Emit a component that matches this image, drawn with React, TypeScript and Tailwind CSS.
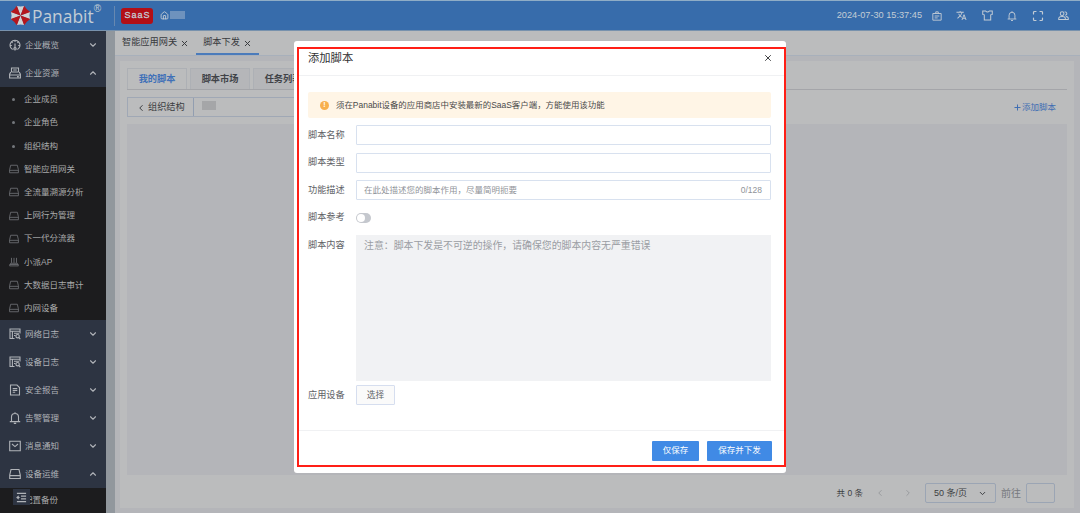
import type { ReactNode } from 'react';
import { ChevronDown, ChevronLeft, ChevronRight, ChevronUp, House, Maximize, Plus, X } from 'lucide-react';
import { MdTranslate } from 'react-icons/md';

const groupsTop = [
  { label: '企业概览', icon: <DashIcon />, open: false },
  { label: '企业资源', icon: <ResourceIcon />, open: true },
];

const subItems: { label: string; kind: 'dot' | 'drive' | 'ap' }[] = [
  { label: '企业成员', kind: 'dot' },
  { label: '企业角色', kind: 'dot' },
  { label: '组织结构', kind: 'dot' },
  { label: '智能应用网关', kind: 'drive' },
  { label: '全流量溯源分析', kind: 'drive' },
  { label: '上网行为管理', kind: 'drive' },
  { label: '下一代分流器', kind: 'drive' },
  { label: '小派AP', kind: 'ap' },
  { label: '大数据日志审计', kind: 'drive' },
  { label: '内网设备', kind: 'drive' },
];

const groupsBottom = [
  { label: '网络日志', icon: <LogIcon />, open: false },
  { label: '设备日志', icon: <LogIcon />, open: false },
  { label: '安全报告', icon: <ReportIcon />, open: false },
  { label: '告警管理', icon: <BellIcon />, open: false },
  { label: '消息通知', icon: <MailIcon />, open: false },
  { label: '设备运维', icon: <DriveIcon />, open: true },
];

const scriptTabs = ['我的脚本', '脚本市场', '任务列表'];

function Svg({ children, size = 12 }: { children: ReactNode; size?: number }) {
  return (
    <svg width={size} height={size} viewBox="0 0 12 12" fill="none" stroke="currentColor" strokeWidth="1.1" className="shrink-0">
      {children}
    </svg>
  );
}

function DashIcon() {
  return (
    <Svg>
      <path d="M3.6 10.6A5 5 0 1 1 8.4 10.6" />
      <path d="M6 1v2M2.4 2.6l1.2 1.2M9.6 2.6L8.4 3.8M1 6.5h1.8M9.2 6.5H11M6 4.5v5" />
      <circle cx="6" cy="9.8" r="1.2" />
    </Svg>
  );
}

function ResourceIcon() {
  return (
    <Svg>
      <path d="M2.5 5V1h7v4M4.2 3h3.6M2.5 5h7M1.8 5L.6 7.2v3.8h10.8V7.2L10.2 5M.6 8h10.8M8 9.6h1.8" />
    </Svg>
  );
}

function LogIcon() {
  return (
    <Svg>
      <path d="M5.5 10.5H1V1h10v4.5M1 3.2h10M3.4 3.2v7.3M5 5.3h5M5 7.5h1.5" />
      <circle cx="8.6" cy="8.2" r="1.7" />
      <path d="M9.8 9.5l1.5 1.6" />
    </Svg>
  );
}

function ReportIcon() {
  return (
    <Svg>
      <path d="M1.5 1H8l2.5 2.5V11h-9zM3.7 4.5h4.6M3.7 6.4h4.6M3.7 8.3h2.5" />
    </Svg>
  );
}

function BellIcon({ size = 12 }: { size?: number }) {
  return (
    <Svg size={size}>
      <path d="M.8 9.6h10.4M2.5 9.5V5a3.5 3.5 0 0 1 7 0v4.5M4.8 11.4h2.4M6 .3v1.2" />
    </Svg>
  );
}

function MailIcon() {
  return (
    <Svg>
      <path d="M.7 1.2h10.6v9.6H.7zM3 4l3 2.6L9 4" />
    </Svg>
  );
}

function DriveIcon({ size = 12 }: { size?: number }) {
  return (
    <Svg size={size}>
      <path d="M2 1.5h8L11.3 7v3.5H.7V7zM.7 7.6h10.6" />
    </Svg>
  );
}

function ApIcon() {
  return (
    <Svg size={10}>
      <path d="M3 1v6M6 1v6M9 1v6M2 7.5h8l1.3 3.2H.7zM.7 9h10.6" />
    </Svg>
  );
}

function BadgeIcon() {
  return (
    <Svg size={10}>
      <path d="M1 3h10v8H1zM4.5 3V1h3v2M3.2 6h5.6M3.2 8.3h3.6" />
    </Svg>
  );
}

function ShirtIcon() {
  return (
    <Svg size={11}>
      <path d="M.8 1h3Q6 3.4 8.2 1h3v3.8L9.5 5.3V11h-7V5.3L.8 4.8z" />
    </Svg>
  );
}

function UsersIcon() {
  return (
    <Svg size={11}>
      <circle cx="4.5" cy="4" r="2" />
      <path d="M.8 10.3V9Q1.2 7 4.5 7T8 9v1.3zM7.2 2.2a1.8 1.8 0 1 1 .6 3.5M8.5 7q2.7.2 2.7 2v1.3H8" />
    </Svg>
  );
}

// Eight wedges, alternating red and light, each with a shallow notch on its outer edge
function Logo() {
  return (
    <svg width="21" height="21" viewBox="-10.5 -10.5 21 21" className="shrink-0">
      {[0, 90, 180, 270, 45, 135, 225, 315].map((deg, i) => (
        <path
          key={deg}
          d={i < 4 ? 'M0 0L-3.9-9.6L0-8.9L3.9-9.6Z' : 'M0 0L-4.4-9.5L0-9L4.4-9.5Z'}
          fill={i < 4 ? '#cfd3d6' : '#b5161d'}
          transform={`rotate(${deg})`}
        />
      ))}
    </svg>
  );
}

function MenuGroup({ label, icon, open }: { label: string; icon: ReactNode; open: boolean }) {
  const Arrow = open ? ChevronUp : ChevronDown;
  return (
    <div className="flex h-7 shrink-0 items-center bg-[#2d3442] pr-2 pl-[9px] text-[#b0b3b8]">
      {icon}
      <span className="ml-1 flex-1 text-[8.5px]">{label}</span>
      <Arrow size={10} strokeWidth={2.6} />
    </div>
  );
}

function Sidebar() {
  return (
    <aside className="relative flex w-[106px] shrink-0 flex-col overflow-hidden bg-[#1c1c1e]">
      {groupsTop.map((g) => (
        <MenuGroup key={g.label} {...g} />
      ))}
      <div className="flex h-[233px] shrink-0 flex-col pt-px">
        {subItems.map(({ label, kind }) => (
          <div key={label} className="flex flex-1 items-center pl-[9px] text-[8.5px] text-[#a9aaab]">
            <span className="flex w-[15px] text-[#696b70]">
              {kind === 'dot' && <i className="ml-[3px] size-[3px] rounded-full bg-[#74777c]" />}
              {kind === 'drive' && <DriveIcon size={10} />}
              {kind === 'ap' && <ApIcon />}
            </span>
            {label}
          </div>
        ))}
      </div>
      {groupsBottom.map((g) => (
        <MenuGroup key={g.label} {...g} />
      ))}
      <div className="flex h-6 shrink-0 items-center pl-6 text-[8.5px] text-[#a9aaab]">配置备份</div>
      <button className="absolute bottom-2 left-[13px] flex h-4 w-[17px] items-center justify-center bg-[#2d3442] text-[#b0b3b8]">
        <Svg size={11}>
          <path d="M1 1.5h10M5.5 4.5H11M5.5 7.5H11M1 10.5h10M1 6h3M3 4.3L1 6l2 1.7" />
        </Svg>
      </button>
    </aside>
  );
}

function Header() {
  return (
    <header className="flex h-[31px] shrink-0 items-center border-t border-b border-t-[#8fadc6] border-b-[#7892ad] bg-[#376cab] text-[#c3ccd5]">
      <div className="flex h-5 w-[115px] items-center border-r border-[#6788b0] pl-[10px]">
        <Logo />
        <span className="ml-px font-['Open_Sans',sans-serif] text-[17.4px] leading-5">Panabit</span>
        <sup className="-top-[7px] text-[10px]">®</sup>
      </div>
      <span className="ml-1.5 flex h-4 w-8 items-center justify-center rounded-[3px] bg-[#b30f16] pl-px text-[9px] tracking-[1px] [-webkit-text-stroke:0.3px]">
        SaaS
      </span>
      <House size={9} strokeWidth={2.4} className="ml-[7px]" />
      <span className="-mt-px ml-px h-2 w-[15px] bg-[#6e92bd]" />
      <span className="ml-auto text-[9.2px]">2024-07-30 15:37:45</span>
      <div className="mr-[11px] ml-2.5 flex w-[137px] shrink-0 items-center justify-between">
        <BadgeIcon />
        <MdTranslate size={11} />
        <ShirtIcon />
        <BellIcon size={10} />
        <Maximize size={12} strokeWidth={2.4} />
        <UsersIcon />
      </div>
    </header>
  );
}

function Workspace() {
  return (
    <main className="flex min-w-0 flex-1 flex-col bg-[#b4b5b9]">
      <nav className="flex h-[25px] shrink-0 border-b border-[#a8b0bb] bg-[#bbbcbd] text-[9.2px] text-[#383a3d]">
        <span className="flex items-center gap-[3px] pl-[7px]">
          智能应用网关 <X size={9} strokeWidth={2.6} />
        </span>
        <span className="ml-[7px] flex w-[63px] items-center gap-[3px] border-b-2 border-[#4b7bbb] pt-0.5 pl-[7px]">
          脚本下发 <X size={9} strokeWidth={2.6} />
        </span>
      </nav>
      <section className="mt-[5px] mr-1.5 mb-[5px] ml-[5px] flex flex-1 flex-col bg-[#bbbcbd] px-[7px] pt-[7px]">
        <div className="flex h-[22px] shrink-0 gap-[3px] border-b border-[#a4a5a9] text-[9.2px] font-bold text-[#404247]">
          {scriptTabs.map((tab, i) => (
            <span
              key={tab}
              className={`flex w-[60px] items-center justify-center border border-b-0 border-[#adb0b5] pt-px ${i === 0 ? 'bg-[#bbbcbd] text-[#3f70b8]' : 'bg-[#b5b6b9]'}`}
            >
              {tab}
            </span>
          ))}
        </div>
        <div className="mt-[7px] flex h-5 shrink-0 items-center text-[9.2px] text-[#3c3e42]">
          <div className="flex h-full w-[300px] items-center border border-[#a0a8b5]">
            <span className="flex h-full w-[66px] items-center gap-0.5 border-r border-[#929eb0] pt-px pl-2">
              <ChevronLeft size={10} strokeWidth={2.4} /> 组织结构
            </span>
            <span className="-mt-[3px] ml-2 h-[9px] w-[14px] bg-[#a5a6a8]" />
          </div>
          <span className="mr-[11px] ml-auto flex items-center text-[8.5px] text-[#3f6eb3]">
            <Plus size={9} strokeWidth={2.6} />
            添加脚本
          </span>
        </div>
        <div className="mt-[7px] h-[351px] shrink-0 bg-[#b4b5b9]" />
        <div className="mt-2 mr-3 flex h-5 items-center justify-end text-[9px] text-[#3c3e42]">
          <span className="mr-3 text-[8.5px]">共 0 条</span>
          <ChevronLeft size={10} className="mr-[18px] text-[#939599]" />
          <ChevronRight size={10} className="mr-3 text-[#939599]" />
          <span className="flex h-5 w-[71px] items-center justify-between rounded-[2px] border border-[#9ba5b4] px-2 pt-px">
            50 条/页 <ChevronDown size={9} strokeWidth={2.6} />
          </span>
          <span className="mx-[5px] text-[10px] text-[#77797d]">前往</span>
          <span className="h-5 w-[29px] rounded-[2px] border border-[#9ba5b4]" />
        </div>
      </section>
    </main>
  );
}

function Field({ label, children, className = 'h-5' }: { label: string; children: ReactNode; className?: string }) {
  return (
    <div className={`flex shrink-0 ${className}`}>
      <label className="flex h-5 w-12 shrink-0 items-center pt-px text-[9.2px] text-[#606266]">{label}</label>
      {children}
    </div>
  );
}

function ScriptDialog() {
  return (
    <div className="absolute top-[41px] left-[294px] h-[432px] w-[492px] rounded-[3px] bg-white pt-1.5 pl-[3px]">
      <div role="dialog" className="flex h-[420px] w-[489px] flex-col border-2 border-[#ff1f16]">
        <div className="flex h-[27px] shrink-0 items-start justify-between border-b border-[#f0f1f3] pr-[11px] pl-[9px] text-[11.3px] leading-[18px] text-[#303133]">
          添加脚本
          <X size={10} strokeWidth={2.2} className="mt-1" />
        </div>
        <div className="flex flex-1 flex-col pt-4 pr-[13px] pl-[9px]">
          <div className="mb-[7px] flex h-[26px] shrink-0 items-center rounded-[2px] bg-[#fff5e6] pl-3 text-[8.45px] text-[#4a4a4a]">
            <span className="mr-[7px] flex size-[9px] items-center justify-center rounded-full bg-[#f8b04d] text-[7px] font-bold text-white">!</span>
            须在Panabit设备的应用商店中安装最新的SaaS客户端，方能使用该功能
          </div>
          <div className="flex flex-col gap-[7.5px]">
            <Field label="脚本名称">
              <div className="flex-1 rounded-[1px] border border-[#d8e1ef]" />
            </Field>
            <Field label="脚本类型">
              <div className="flex-1 rounded-[1px] border border-[#d8e1ef]" />
            </Field>
            <Field label="功能描述">
              <div className="flex flex-1 items-center justify-between rounded-[1px] border border-[#d8e1ef] pr-2 pl-[7px] text-[8.5px] text-[#909399]">
                <span>在此处描述您的脚本作用，尽量简明扼要</span>
                <span>0/128</span>
              </div>
            </Field>
            <Field label="脚本参考">
              <span className="mt-[5px] h-[10px] w-[15px] rounded-full bg-[#c5c8ce] p-px">
                <i className="block size-2 rounded-full bg-white" />
              </span>
            </Field>
            <Field label="脚本内容" className="h-[146px]">
              <div className="flex-1 bg-[#f1f2f4] px-2 pt-1 text-[9.9px] leading-[13px] text-[#9a9da3]">
                注意：脚本下发是不可逆的操作，请确保您的脚本内容无严重错误
              </div>
            </Field>
          </div>
          <Field label="应用设备" className="mt-1 h-5">
            <button className="w-[39px] rounded-[1px] border border-[#d6deef] bg-[#fafafa] pt-px text-[8.7px] text-[#606266]">选择</button>
          </Field>
        </div>
        <div className="flex h-[35px] shrink-0 items-center justify-end gap-2 border-t border-[#f0f1f3] pt-[5px] pr-3 text-[8.5px] text-white">
          <button className="h-5 w-[47px] rounded-[1px] bg-[#408ae5]">仅保存</button>
          <button className="h-5 w-[65px] rounded-[1px] bg-[#408ae5]">保存并下发</button>
        </div>
      </div>
    </div>
  );
}

export default function App() {
  return (
    <div className="relative flex h-[513px] w-[1080px] flex-col overflow-hidden font-['Liberation_Sans','Noto_Sans_CJK_SC',sans-serif] leading-normal whitespace-nowrap">
      <Header />
      <div className="flex min-h-0 flex-1">
        <Sidebar />
        <div className="w-[9px] shrink-0 bg-[#91979d]" />
        <Workspace />
      </div>
      <ScriptDialog />
    </div>
  );
}
